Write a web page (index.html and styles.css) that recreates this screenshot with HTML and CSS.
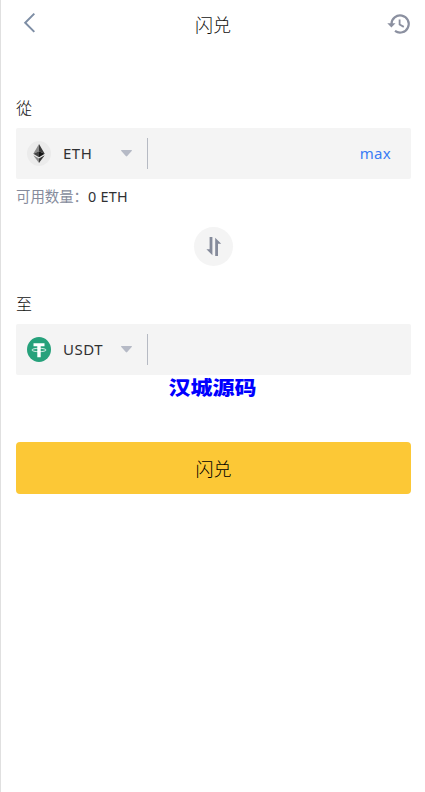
FILE: index.html
```html
<!DOCTYPE html>
<html lang="zh">
<head>
<meta charset="utf-8">
<meta name="viewport" content="width=device-width, initial-scale=1">
<title>闪兑</title>
<link rel="stylesheet" href="styles.css">
</head>
<body>
<div class="page">
  <header class="header">
    <svg class="back" width="14" height="22" viewBox="0 0 14 22"><path d="M11.3 1.6 2.2 10.8l9.1 9.1"/></svg>
    <h1 class="title">闪兑</h1>
    <svg class="history" width="24" height="22" viewBox="0 0 24 22">
      <path class="ring" d="M4.5 11a8.6 8.6 0 1 1 3.5 6.9"/>
      <path class="arrow" d="M.3 10.2h8.2l-4.1 4.2z"/>
      <path class="hands" d="M12.6 6.4v5.1l4.2 2.4"/>
    </svg>
  </header>
  <main>
    <div class="label">從</div>
    <div class="field">
      <div class="coin">
        <svg class="logo" width="24" height="25" viewBox="0 0 24 25">
          <ellipse cx="12" cy="12.5" rx="12" ry="12.5" fill="#ebebeb"/>
          <path d="M12 3 6.3 12.8 12 10.2z" fill="#8a8a8a"/>
          <path d="m12 3 5.7 9.8L12 10.2z" fill="#393939"/>
          <path d="m6.3 12.8 5.7-2.6v6z" fill="#444"/>
          <path d="m17.7 12.8-5.7-2.6v6z" fill="#151515"/>
          <path d="m6.3 14.3 5.7 3.3V22z" fill="#8a8a8a"/>
          <path d="m17.7 14.3-5.7 3.3V22z" fill="#393939"/>
        </svg>
        <span class="symbol">ETH</span>
        <svg class="caret" width="11" height="7" viewBox="0 0 11 7"><path d="M.5 0h10q.8.3.2 1L6.2 6q-.7.8-1.4 0L.3 1Q-.3.3.5 0z"/></svg>
      </div>
      <span class="max">max</span>
    </div>
    <div class="available">可用数量：<span class="amount">0 ETH</span></div>
    <div class="swap">
      <svg width="16" height="19" viewBox="0 0 16 19"><path d="M3.6 0h2.8v18.3L.4 12.2h3.2zM9.2 19V.7l6 6.1H12V19z"/></svg>
    </div>
    <div class="label label-to">至</div>
    <div class="field">
      <div class="coin">
        <svg class="logo" width="24" height="25" viewBox="0 0 24 25">
          <ellipse cx="12" cy="12.5" rx="12" ry="12.5" fill="#26a17b"/>
          <path d="M6.5 6.2h11v3h-3.8v11h-3.4v-11H6.5z" fill="#fff"/>
          <ellipse cx="12" cy="13" rx="7.1" ry="1.7" fill="none" stroke="#fff" stroke-width=".8"/>
        </svg>
        <span class="symbol">USDT</span>
        <svg class="caret" width="11" height="7" viewBox="0 0 11 7"><path d="M.5 0h10q.8.3.2 1L6.2 6q-.7.8-1.4 0L.3 1Q-.3.3.5 0z"/></svg>
      </div>
    </div>
    <div class="source">汉城源码</div>
    <button class="submit">闪兑</button>
  </main>
</div>
</body>
</html>
```
FILE: styles.css
```css
* { box-sizing: border-box; }
body {
  margin: 0;
  background: #fff;
  color: #303133;
  font-family: "Noto Sans", "Noto Sans CJK SC", sans-serif;
  font-size: 15px;
}
svg { display: block; flex: none; }
.page {
  min-height: 100vh;
  border-left: 1px solid #e0e0e0;
  padding: 0 14px 0 15px;
}
.header {
  display: flex;
  align-items: center;
  justify-content: space-between;
  height: 47px;
}
.back {
  margin: 0 2px 2px 7px;
  fill: none;
  stroke: #7e8ea5;
  stroke-width: 2;
}
.title {
  margin: 0;
  padding-top: 2px;
  font-size: 18px;
  font-weight: 300;
  line-height: 24px;
  color: #111;
}
.history { fill: none; stroke: #8b90a0; stroke-width: 2.2; }
.history .arrow { fill: #8b90a0; stroke: none; }
.history .hands { stroke-width: 1.8; }
.label {
  height: 24px;
  margin: 49px 0 8px;
  font-size: 16px;
  font-weight: 300;
  line-height: 24px;
  color: #111;
}
.field {
  display: flex;
  align-items: center;
  justify-content: space-between;
  height: 51px;
  padding: 0 20px 0 11px;
  background: #f4f4f4;
  border-radius: 2px;
}
.coin {
  display: flex;
  align-items: center;
  width: 121px;
  height: 31px;
  padding-right: 15px;
  border-right: 1px solid #b6bac3;
}
.symbol { flex: 1; margin-left: 12px; padding-bottom: 2px; letter-spacing: .5px; }
.caret { fill: #b6bac6; }
.max { padding-bottom: 2px; color: #3b7cf5; letter-spacing: .3px; }
.available {
  height: 24px;
  margin-top: 6px;
  font-size: 14.4px;
  line-height: 24px;
  color: #868b9c;
  white-space: nowrap;
}
.amount { color: #303133; letter-spacing: .25px; }
.swap {
  display: flex;
  align-items: center;
  justify-content: center;
  width: 39px;
  height: 39px;
  margin: 18px auto 0;
  border-radius: 50%;
  background: #f4f4f4;
}
.swap svg { fill: #858b9b; }
.label-to { margin-top: 26px; }
.source {
  height: 25px;
  padding-right: 2px;
  font-size: 22px;
  font-weight: 900;
  line-height: 25px;
  text-align: center;
  color: #00f;
  transform: scaleY(.88);
}
.submit {
  display: block;
  width: 100%;
  height: 52px;
  margin: 42px 0 0;
  padding: 0;
  border: 0;
  border-radius: 4px;
  background: #fcc836;
  color: #000;
  font-family: inherit;
  font-size: 18px;
  font-weight: 300;
}
```
